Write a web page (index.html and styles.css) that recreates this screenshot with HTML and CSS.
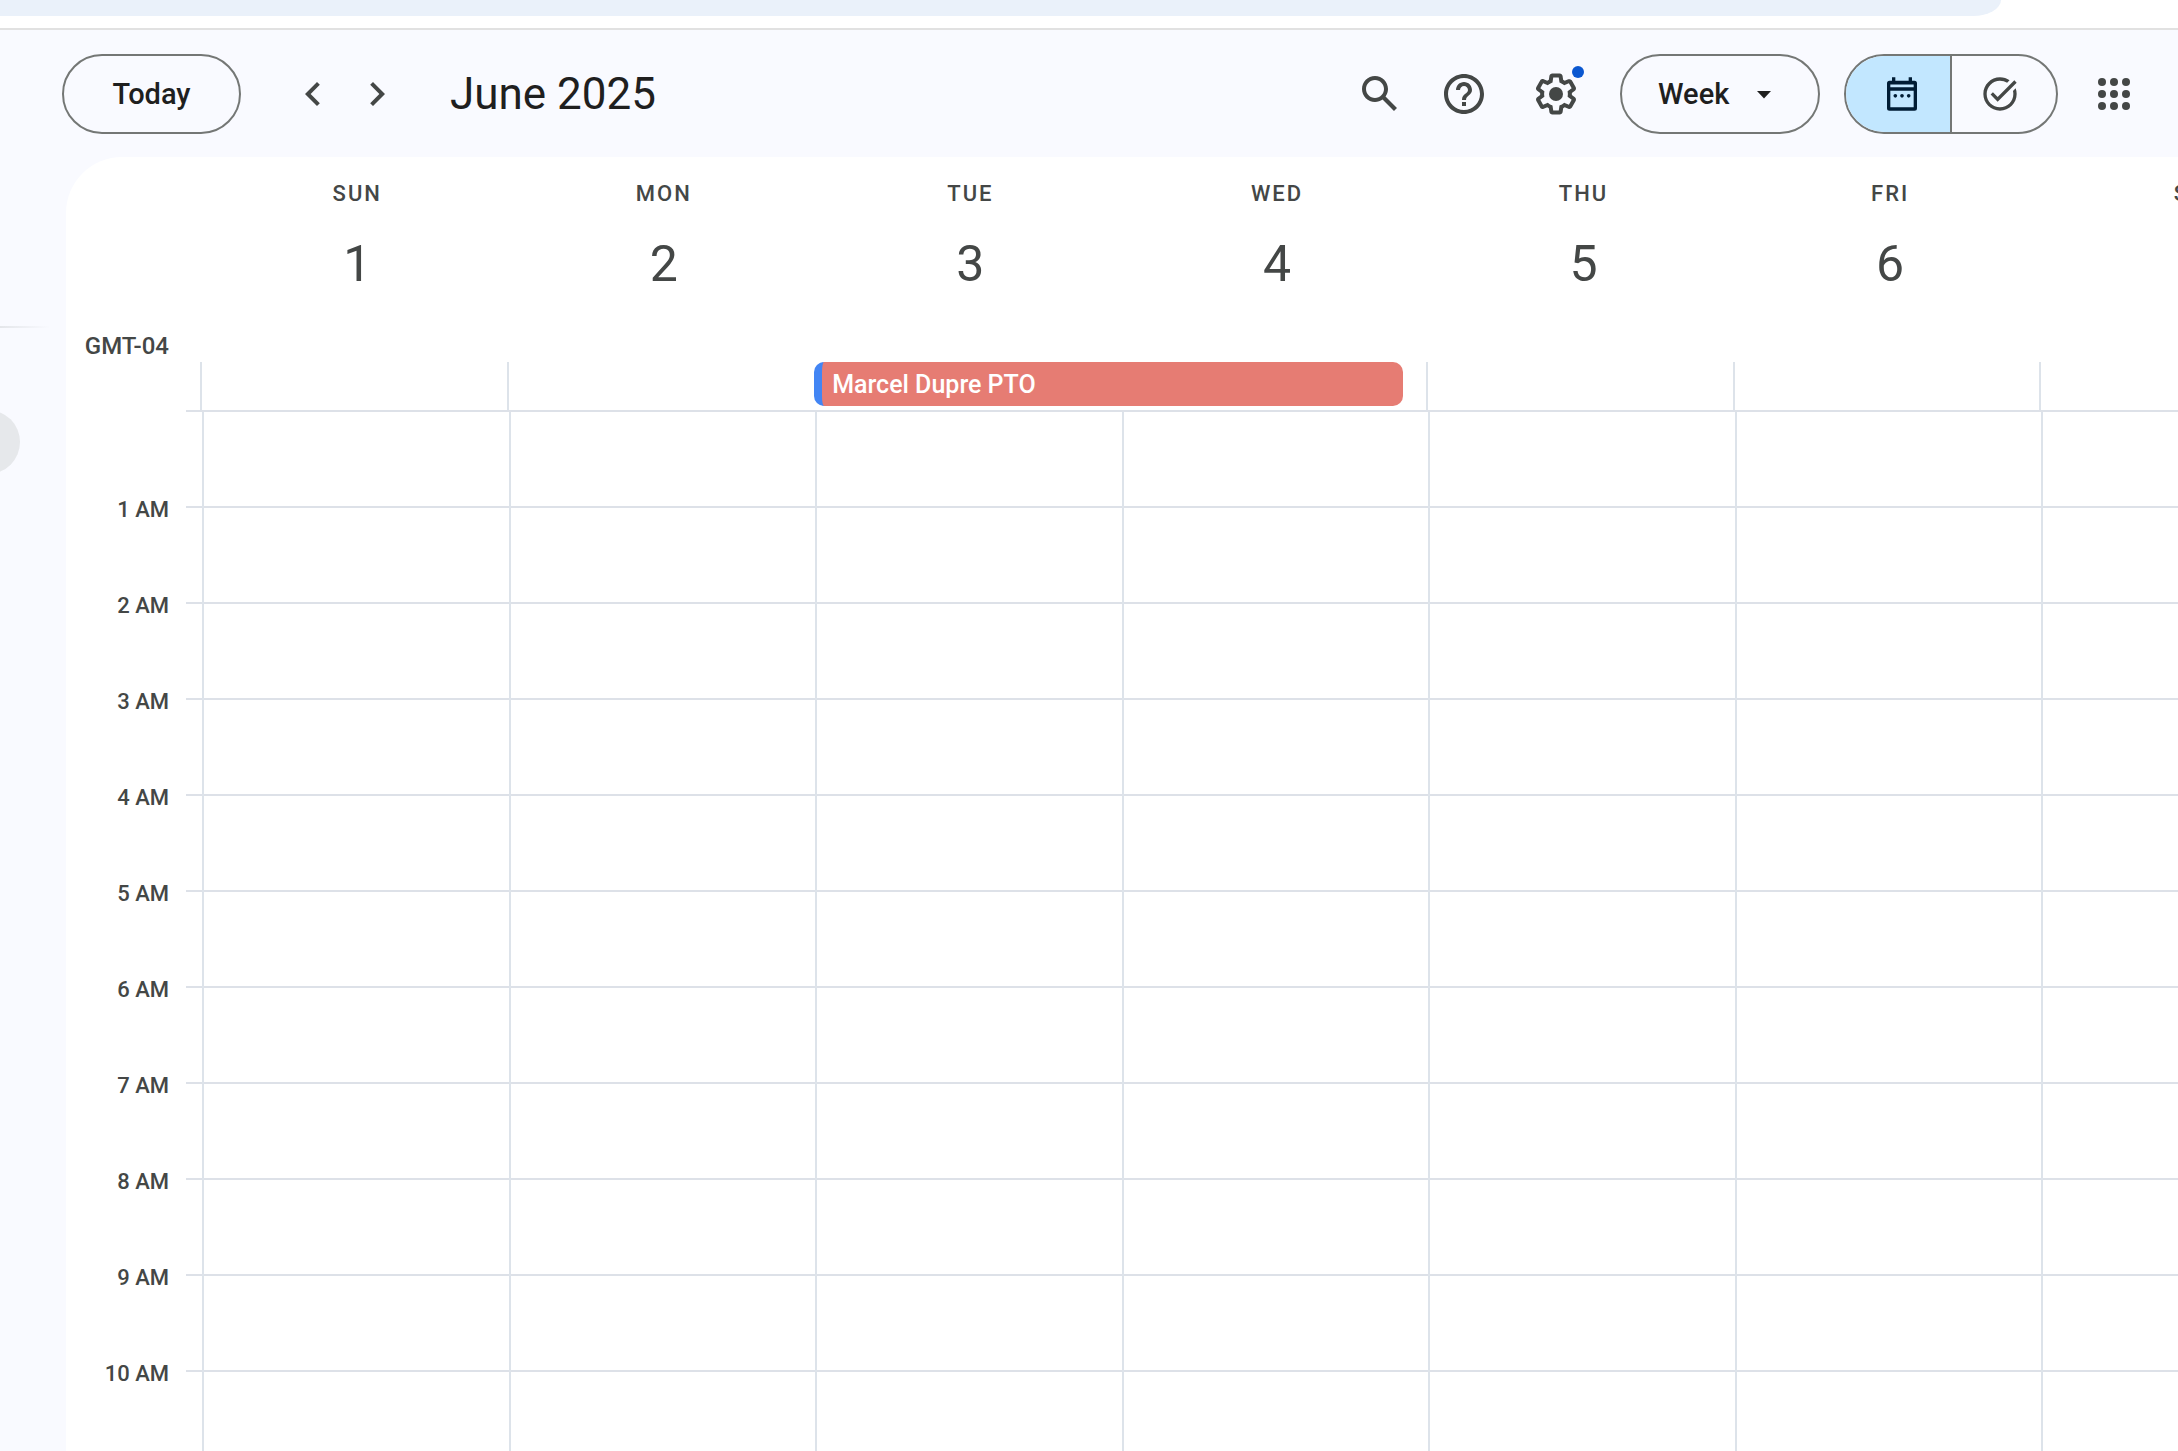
FILE: index.html
```html
<!DOCTYPE html>
<html lang="en">

<head>
    <meta charset="UTF-8">
    <meta name="viewport" content="width=device-width, initial-scale=1.0">
    <title>Calendar - June 2025</title>
    <link rel="stylesheet" href="styles.css">
</head>

<body>
    <div class="browser-bar">
        <div class="address"></div>
    </div>

    <header class="toolbar">
        <button class="pill today" type="button">Today</button>
        <div class="arrows">
            <button class="icon-btn" type="button" aria-label="Previous week">
                <svg class="icon" viewBox="0 0 24 24"><path d="M15.41 7.41 14 6l-6 6 6 6 1.41-1.41L10.83 12z"/></svg>
            </button>
            <button class="icon-btn" type="button" aria-label="Next week">
                <svg class="icon" viewBox="0 0 24 24"><path d="M10 6 8.59 7.41 13.17 12l-4.58 4.59L10 18l6-6z"/></svg>
            </button>
        </div>
        <h1 class="month">June 2025</h1>

        <div class="actions">
            <button class="icon-btn action" type="button" aria-label="Search">
                <svg class="icon" viewBox="0 0 24 24"><path d="M20.49 19l-5.73-5.73C15.53 12.2 16 10.91 16 9.5 16 5.91 13.09 3 9.5 3S3 5.91 3 9.5 5.91 16 9.5 16c1.41 0 2.7-.47 3.77-1.24L19 20.49 20.49 19zM5 9.5C5 7.01 7.01 5 9.5 5S14 7.01 14 9.5 11.99 14 9.5 14 5 11.99 5 9.5z"/></svg>
            </button>
            <button class="icon-btn action" type="button" aria-label="Support">
                <svg class="icon" viewBox="0 0 24 24"><path d="M11 18h2v-2h-2v2zm1-16C6.48 2 2 6.48 2 12s4.48 10 10 10 10-4.48 10-10S17.52 2 12 2zm0 18c-4.41 0-8-3.59-8-8s3.59-8 8-8 8 3.59 8 8-3.59 8-8 8zm0-14c-2.21 0-4 1.79-4 4h2c0-1.1.9-2 2-2s2 .9 2 2c0 2-3 1.75-3 5h2c0-2.25 3-2.5 3-5 0-2.21-1.79-4-4-4z"/></svg>
            </button>
            <button class="icon-btn settings" type="button" aria-label="Settings">
                <svg class="icon" viewBox="0 0 24 24"><path d="M13.85 22.25h-3.7c-.74 0-1.36-.54-1.45-1.27l-.27-1.89c-.27-.14-.53-.29-.79-.46l-1.8.72c-.7.26-1.47-.03-1.81-.65L2.2 15.53c-.35-.66-.2-1.44.36-1.88l1.53-1.19c-.01-.15-.02-.3-.02-.46 0-.15.01-.31.02-.46l-1.52-1.19c-.59-.45-.74-1.26-.37-1.88l1.85-3.19c.34-.62 1.11-.9 1.79-.63l1.81.73c.26-.17.52-.32.78-.46l.27-1.91c.09-.7.71-1.25 1.44-1.25h3.7c.74 0 1.36.54 1.45 1.27l.27 1.89c.27.14.53.29.79.46l1.8-.72c.71-.26 1.48.03 1.82.65l1.84 3.18c.36.66.2 1.44-.36 1.88l-1.52 1.19c.01.15.02.3.02.46s-.01.31-.02.46l1.52 1.19c.56.45.72 1.23.37 1.86l-1.86 3.22c-.34.62-1.11.9-1.8.63l-1.8-.72c-.26.17-.52.32-.78.46l-.27 1.91c-.1.68-.72 1.22-1.46 1.22zm-3.23-2h2.76l.37-2.55.53-.22c.44-.18.88-.44 1.34-.78l.45-.34 2.38.96 1.38-2.4-2.03-1.58.07-.56c.03-.26.06-.51.06-.78s-.03-.53-.06-.78l-.07-.56 2.03-1.58-1.39-2.4-2.39.96-.45-.35c-.42-.32-.87-.58-1.33-.77l-.52-.22-.37-2.55h-2.76l-.37 2.55-.53.21c-.44.19-.88.44-1.34.79l-.45.33-2.38-.95-1.39 2.39 2.03 1.58-.07.56a7 7 0 0 0-.06.79c0 .26.02.53.06.78l.07.56-2.03 1.58 1.38 2.4 2.39-.96.45.35c.43.33.86.58 1.33.77l.53.22.38 2.55z"/><circle cx="12" cy="12" r="3.5"/></svg>
                <span class="badge"></span>
            </button>

            <div class="view">
                <select class="pill view-select" aria-label="View">
                    <option>Day</option>
                    <option selected>Week</option>
                    <option>Month</option>
                </select>
                <svg class="caret" viewBox="0 0 14 8"><path d="M0 0h14L7 7.5z"/></svg>
            </div>

            <div class="pill switch">
                <button class="switch-btn active" type="button" aria-label="Calendar">
                    <svg class="icon-small" viewBox="0 0 24 24"><path fill-rule="evenodd" d="M6 2h2v2h8V2h2v2h1.5A1.5 1.5 0 0 1 21 5.5v15a1.5 1.5 0 0 1-1.5 1.5h-15A1.5 1.5 0 0 1 3 20.5v-15A1.5 1.5 0 0 1 4.5 4H6zM5 6.3V8h14V6.3zM5 10v10h14V10z"/><circle cx="8" cy="13.1" r="1.1"/><circle cx="12" cy="13.1" r="1.1"/><circle cx="16" cy="13.1" r="1.1"/></svg>
                </button>
                <button class="switch-btn" type="button" aria-label="Tasks">
                    <svg class="icon-small" viewBox="0 0 24 24"><path d="M22 5.18 10.59 16.6l-4.24-4.24 1.41-1.41 2.83 2.83 10-10L22 5.18zM19.79 10.22c.13.57.21 1.17.21 1.78 0 4.42-3.58 8-8 8s-8-3.58-8-8 3.58-8 8-8c1.58 0 3.04.46 4.28 1.25l1.44-1.44C16.1 2.67 14.13 2 12 2 6.48 2 2 6.48 2 12s4.48 10 10 10 10-4.48 10-10c0-1.19-.22-2.33-.6-3.39l-1.61 1.61z"/></svg>
                </button>
            </div>

            <button class="icon-btn" type="button" aria-label="Google apps">
                <svg class="icon" viewBox="0 0 24 24"><circle cx="6" cy="6" r="2"/><circle cx="12" cy="6" r="2"/><circle cx="18" cy="6" r="2"/><circle cx="6" cy="12" r="2"/><circle cx="12" cy="12" r="2"/><circle cx="18" cy="12" r="2"/><circle cx="6" cy="18" r="2"/><circle cx="12" cy="18" r="2"/><circle cx="18" cy="18" r="2"/></svg>
            </button>
        </div>
    </header>

    <div class="content">
        <aside class="sidebar">
            <div class="sidebar-line"></div>
            <div class="sidebar-circle"></div>
        </aside>

        <main class="calendar">
            <div class="days-head">
                <div class="timezone">GMT-04</div>
                <div class="day-head">SUN<span class="date">1</span></div>
                <div class="day-head">MON<span class="date">2</span></div>
                <div class="day-head">TUE<span class="date">3</span></div>
                <div class="day-head">WED<span class="date">4</span></div>
                <div class="day-head">THU<span class="date">5</span></div>
                <div class="day-head">FRI<span class="date">6</span></div>
                <div class="day-head">SAT<span class="date">7</span></div>
            </div>

            <div class="all-day">
                <div class="cell"></div>
                <div class="cell"></div>
                <div class="cell"></div>
                <div class="cell"></div>
                <div class="cell"></div>
                <div class="cell"></div>
                <div class="cell"></div>
                <button class="event" type="button">Marcel Dupre PTO</button>
            </div>

            <div class="hours">
                <div class="hour-labels">
                    <div class="hour">1 AM</div>
                    <div class="hour">2 AM</div>
                    <div class="hour">3 AM</div>
                    <div class="hour">4 AM</div>
                    <div class="hour">5 AM</div>
                    <div class="hour">6 AM</div>
                    <div class="hour">7 AM</div>
                    <div class="hour">8 AM</div>
                    <div class="hour">9 AM</div>
                    <div class="hour">10 AM</div>
                </div>
                <div class="hour-grid">
                    <div class="cell"></div>
                    <div class="cell"></div>
                    <div class="cell"></div>
                    <div class="cell"></div>
                    <div class="cell"></div>
                    <div class="cell"></div>
                    <div class="cell"></div>
                </div>
            </div>
        </main>
    </div>
</body>

</html>
```
FILE: styles.css
```css
* {
    box-sizing: border-box;
    padding: 0;
    margin: 0;
}

html {
    overflow: hidden;
}

body {
    display: flex;
    flex-direction: column;
    height: 100vh;
    overflow: hidden;
    background-color: #f9faff;
    color: #444746;
    font-family: Roboto, "Liberation Sans", sans-serif;
}

button,
select {
    border: none;
    background: none;
    color: inherit;
    font: inherit;
    cursor: pointer;
}

svg {
    display: block;
    fill: currentColor;
}

/* bottom edge of the browser's address bar */
.browser-bar {
    flex: none;
    height: 30px;
    background-color: #fff;
    border-bottom: 2px solid #e1e1e1;
}

.address {
    height: 16px;
    margin-right: 177px;
    background-color: #eaf1fa;
    border-bottom-right-radius: 28px 16px;
}

/* toolbar */
.toolbar {
    flex: none;
    display: flex;
    align-items: center;
    padding: 24px 40px 23px 62px;
}

.pill {
    height: 80px;
    border: 2px solid #747775;
    border-radius: 40px;
    color: #1f1f1f;
    font-size: 29px;
    font-weight: 500;
}

.today {
    width: 179px;
}

.arrows {
    display: flex;
    gap: 16px;
    margin: 0 49px 0 48px;
}

.icon-btn {
    display: flex;
    justify-content: center;
}

.icon {
    width: 48px;
    height: 48px;
}

.icon-small {
    width: 40px;
    height: 40px;
}

.month {
    color: #1f1f1f;
    font-size: 44px;
    font-weight: 400;
}

.actions {
    display: flex;
    align-items: center;
    margin-left: auto;
}

.action {
    width: 84px;
}

.settings {
    position: relative;
    width: 100px;
}

.badge {
    position: absolute;
    top: -4px;
    right: 22px;
    width: 12px;
    height: 12px;
    border-radius: 50%;
    background-color: #0b57d0;
}

.view {
    position: relative;
    margin: 0 24px 0 14px;
}

.view-select {
    display: block;
    width: 200px;
    padding-left: 36px;
    appearance: none;
}

.caret {
    position: absolute;
    top: 37px;
    right: 49px;
    width: 14px;
    height: 8px;
    color: #1f1f1f;
    pointer-events: none;
}

.switch {
    display: flex;
    width: 214px;
    margin-right: 32px;
    overflow: hidden;
}

.switch-btn {
    flex: 1;
    display: flex;
    align-items: center;
    justify-content: center;
    padding-right: 8px;
    color: #444746;
}

.switch-btn.active {
    padding: 0 0 0 8px;
    border-right: 2px solid #747775;
    background-color: #c2e7ff;
    color: #001d35;
}

/* content */
.content {
    flex: 1;
    display: flex;
    min-height: 0;
    overflow: hidden;
}

.sidebar {
    flex: none;
    width: 66px;
    padding-top: 169px;
    overflow: hidden;
}

.sidebar-line {
    width: 50px;
    height: 2px;
    background: linear-gradient(to right, #e4e6ea, #f9faff);
}

.sidebar-circle {
    width: 64px;
    height: 64px;
    margin: 82px 0 0 -44px;
    border-radius: 50%;
    background-color: #e6e8eb;
}

/* the week is wider than the window, saturday runs off the right side */
.calendar {
    flex: 1;
    display: flex;
    flex-direction: column;
    min-width: 0;
    margin-right: -172px;
    background-color: #fff;
    border-top-left-radius: 56px;
}

.days-head {
    flex: none;
    display: grid;
    grid-template-columns: 138px repeat(7, 1fr);
    height: 205px;
}

.timezone {
    align-self: end;
    padding: 0 35px 3px 0;
    font-size: 24px;
    font-weight: 500;
    line-height: 26px;
    text-align: right;
    white-space: nowrap;
}

.day-head {
    padding-top: 24px;
    font-size: 22px;
    font-weight: 500;
    line-height: 26px;
    letter-spacing: 2px;
    text-align: center;
}

.date {
    display: block;
    margin-top: 25px;
    font-size: 50px;
    font-weight: 400;
    line-height: 64px;
    letter-spacing: 0;
}

.cell {
    border-left: 2px solid #dde3ea;
}

.all-day {
    flex: none;
    display: grid;
    grid-template-columns: repeat(7, 1fr);
    grid-template-rows: 48px;
    margin-left: 120px;
    padding-left: 14px;
    border-bottom: 2px solid #dde1e8;
}

.all-day .cell {
    grid-row: 1;
}

.event {
    grid-row: 1;
    grid-column: 3 / span 2;
    height: 44px;
    margin: 0 23px 0 1px;
    padding-left: 10px;
    overflow: hidden;
    border-left: 8px solid #4285f4;
    border-radius: 10px;
    background-color: #e67c73;
    color: #fff;
    font-size: 25px;
    font-weight: 500;
    text-align: left;
}

.hours {
    flex: 1;
    display: flex;
    min-height: 0;
    margin-right: 2px;
}

.hour-labels {
    flex: none;
    width: 120px;
    padding: 50px 17px 0 0;
    text-align: right;
}

.hour {
    font-size: 22px;
    font-weight: 500;
    line-height: 96px;
}

.hour-grid {
    flex: 1;
    display: grid;
    grid-template-columns: repeat(7, 1fr);
    padding-left: 16px;
    background: repeating-linear-gradient(to bottom, transparent 0, transparent 94px, #dde1e8 94px, #dde1e8 96px);
}
```
